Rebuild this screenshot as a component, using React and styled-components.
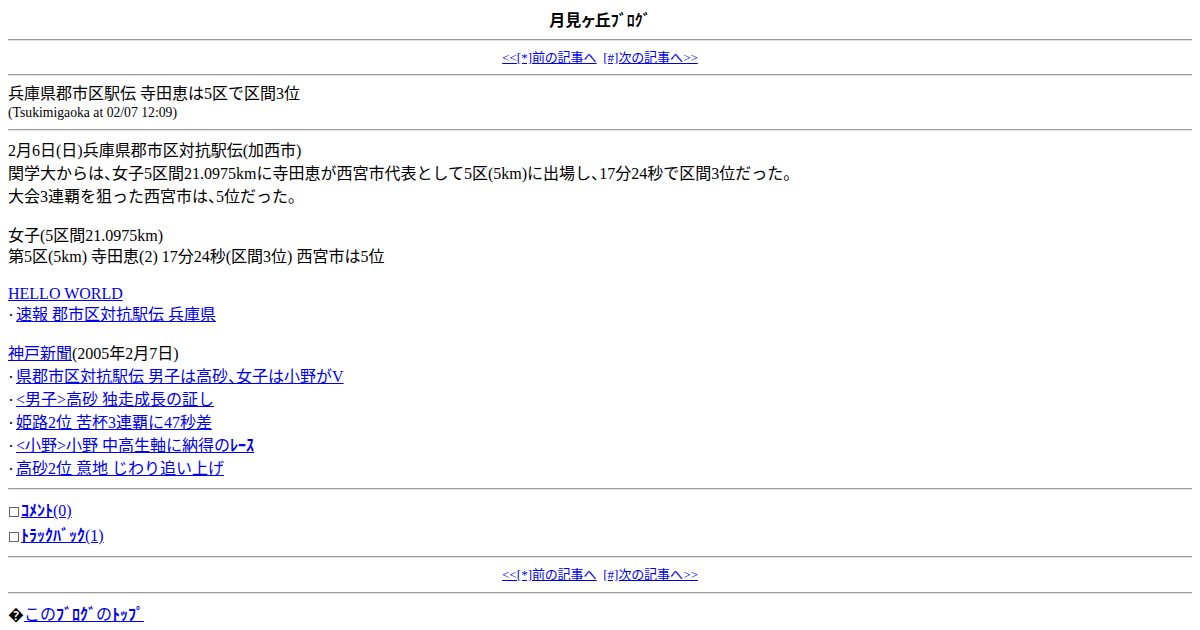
import React from "react";
import styled, { createGlobalStyle } from "styled-components";

const GlobalStyle = createGlobalStyle`
  body {
    margin: 8px;
    font-family: "Liberation Serif", "Noto Sans CJK JP", serif;
    font-size: 16px;
    color: #000;
    background: #fff;
  }
  a { color: #0000ee; }
`;

const Title = styled.div`
  text-align: center;
  font-weight: bold;
  font-family: "Noto Sans CJK JP", sans-serif;
  line-height: 23px;
  font-feature-settings: "palt";
`;

const Rule = styled.hr`
  margin: 8px 0;
  border: 0;
  border-top: 1px solid #9a9a9a;
  border-bottom: 1px solid #e4e4e4;
`;

const Nav = styled.div`
  text-align: center;
  font-size: 13px;
  line-height: ${(p) => p.$lh || 17}px;
  font-feature-settings: "palt";
`;

const Headline = styled.div`
  line-height: 20px;
`;

const Meta = styled.div`
  font-size: 13.7px;
  line-height: 17px;
`;

const Block = styled.div`
  line-height: ${(p) => p.$lh || 21}px;
  margin-top: ${(p) => p.$top || 0}px;
  margin-bottom: ${(p) => p.$gap || 0}px;
`;

const Row = styled.div`
  line-height: ${(p) => p.$lh || 24}px;
`;

// 全角読点を半角幅で
const Comma = styled.span`
  font-family: "Noto Sans CJK JP", sans-serif;
  font-feature-settings: "halt";
  line-height: 16px;
`;

const Bullet = styled.span`
  font-family: "Noto Sans CJK JP", sans-serif;
  font-size: 12px;
  line-height: 12px;
  margin-right: 2px;
`;

const Box = styled.span`
  display: inline-block;
  width: 10px;
  height: 10px;
  border: 1px solid #666;
  box-sizing: border-box;
  margin: 0 2px 0 1px;
  vertical-align: -1px;
`;

const Kana = styled.span`
  font-family: "Noto Sans CJK JP", sans-serif;
  font-weight: bold;
  font-feature-settings: "palt";
  line-height: 16px;
`;

const NavBar = ({ lh }) => (
  <Nav $lh={lh}>
    <a href="#">&lt;&lt;[*]前の記事へ</a>&nbsp;&nbsp;<a href="#">[#]次の記事へ&gt;&gt;</a>
  </Nav>
);

const Item = ({ children }) => (
  <Row $lh={23}>
    <Bullet>･</Bullet>
    <a href="#">{children}</a>
  </Row>
);

export default function App() {
  return (
    <>
      <GlobalStyle />
      <Title>月見ヶ丘ﾌﾞﾛｸﾞ</Title>
      <Rule />
      <NavBar />
      <Rule />
      <Headline>兵庫県郡市区駅伝 寺田恵は5区で区間3位</Headline>
      <Meta>(Tsukimigaoka at 02/07 12:09)</Meta>
      <Rule />
      <Block $lh={23} $gap={17}>
        2月6日(日)兵庫県郡市区対抗駅伝(加西市)
        <br />
        関学大からは<Comma>、</Comma>女子5区間21.0975kmに寺田恵が西宮市代表として5区(5km)に出場し<Comma>、</Comma>17分24秒で区間3位だった。
        <br />
        大会3連覇を狙った西宮市は<Comma>、</Comma>5位だった。
      </Block>
      <Block $lh={21} $gap={16}>
        女子(5区間21.0975km)
        <br />
        第5区(5km) 寺田恵(2) 17分24秒(区間3位) 西宮市は5位
      </Block>
      <Block $lh={21} $gap={17}>
        <a href="#">HELLO WORLD</a>
        <Row $lh={21}>
          <Bullet>･</Bullet>
          <a href="#">速報 郡市区対抗駅伝 兵庫県</a>
        </Row>
      </Block>
      <Block $lh={23}>
        <a href="#">神戸新聞</a>(2005年2月7日)
        <Item>県郡市区対抗駅伝 男子は高砂<Comma>、</Comma>女子は小野がV</Item>
        <Item>&lt;男子&gt;高砂 独走成長の証し</Item>
        <Item>姫路2位 苦杯3連覇に47秒差</Item>
        <Item>&lt;小野&gt;小野 中高生軸に納得の<Kana>ﾚｰｽ</Kana></Item>
        <Item>高砂2位 意地 じわり追い上げ</Item>
      </Block>
      <Rule />
      <Row $lh={25}>
        <Box />
        <a href="#"><Kana>ｺﾒﾝﾄ</Kana>(0)</a>
      </Row>
      <Row $lh={25}>
        <Box />
        <a href="#"><Kana>ﾄﾗｯｸﾊﾞｯｸ</Kana>(1)</a>
      </Row>
      <Rule />
      <NavBar lh={18} />
      <Rule />
      <Block $lh={24} $top={9}>
        �<a href="#">この<Kana>ﾌﾞﾛｸﾞ</Kana>の<Kana>ﾄｯﾌﾟ</Kana></a>
        <div>
          �<a href="#"><Kana>ﾌﾞﾛｸﾞ</Kana>一覧</a>
        </div>
      </Block>
    </>
  );
}
